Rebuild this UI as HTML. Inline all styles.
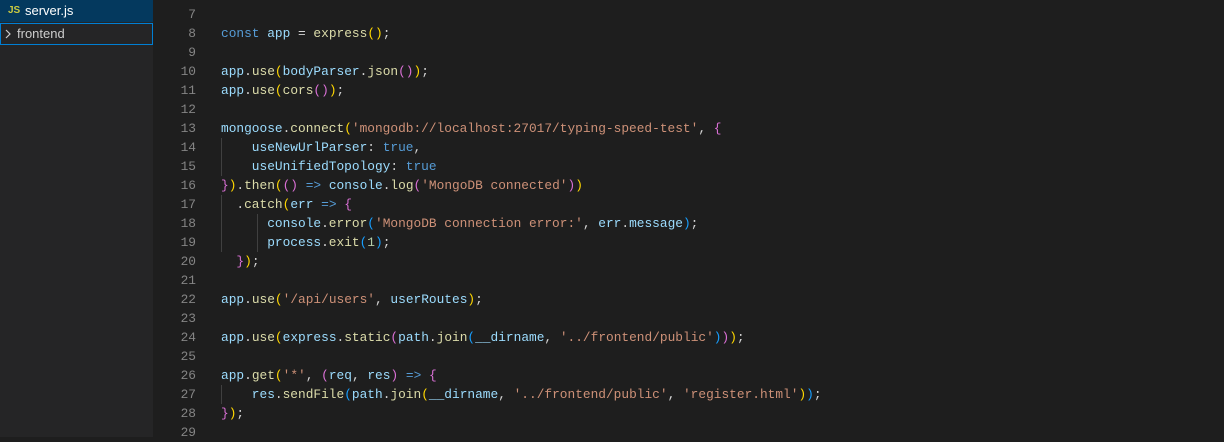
<!DOCTYPE html>
<html><head><style>
body{margin:0;width:1224px;height:437px;background:#1e1e1e;overflow:hidden;position:relative;font-family:"Liberation Mono",monospace}
.side{position:absolute;left:0;top:0;width:153px;height:437px;background:#252526;font-family:"Liberation Sans",sans-serif;font-size:13px;color:#ccc}
.r1{position:absolute;left:0;top:0;width:153px;height:22px;background:#04395e;color:#fff}
.r2{position:absolute;left:0;top:23px;width:151px;height:20px;border:1px solid #007fd4}
.ln{position:absolute;left:160px;width:36px;text-align:right;color:#858585;font-size:12.83px;line-height:19px}
.c{position:absolute;left:221px;color:#d4d4d4;font-size:12.83px;line-height:19px;white-space:pre}
.k{color:#569cd6}.v{color:#9cdcfe}.f{color:#dcdcaa}.s{color:#ce9178}.n{color:#b5cea8}
.g{color:#ffd700}.p{color:#da70d6}.b{color:#179fff}
.guide{position:absolute;width:1px;background:#404040}
</style></head><body>
<div class="side">
<div class="r1"><span style="position:absolute;left:8px;top:5px;color:#cbcb41;font-size:10px;font-weight:bold">JS</span><span style="position:absolute;left:25px;top:3px">server.js</span></div>
<div class="r2"><svg style="position:absolute;left:2px;top:4px" width="10" height="12" viewBox="0 0 10 12"><path d="M3 2 L7 6 L3 10" fill="none" stroke="#ccc" stroke-width="1.2"/></svg><span style="position:absolute;left:16px;top:2px">frontend</span></div>
</div>
<div class="guide" style="left:221px;top:138px;height:38px"></div>
<div class="guide" style="left:221px;top:195px;height:57px"></div>
<div class="guide" style="left:257px;top:214px;height:38px"></div>
<div class="guide" style="left:221px;top:385px;height:19px"></div>
<div class="ln" style="top:4.5px">7</div>
<div class="ln" style="top:23.5px">8</div><div class="c" style="top:23.5px"><span class="k">const</span> <span class="v">app</span> = <span class="f">express</span><span class="g">()</span>;</div>
<div class="ln" style="top:42.5px">9</div>
<div class="ln" style="top:61.5px">10</div><div class="c" style="top:61.5px"><span class="v">app</span>.<span class="f">use</span><span class="g">(</span><span class="v">bodyParser</span>.<span class="f">json</span><span class="p">()</span><span class="g">)</span>;</div>
<div class="ln" style="top:80.5px">11</div><div class="c" style="top:80.5px"><span class="v">app</span>.<span class="f">use</span><span class="g">(</span><span class="f">cors</span><span class="p">()</span><span class="g">)</span>;</div>
<div class="ln" style="top:99.5px">12</div>
<div class="ln" style="top:118.5px">13</div><div class="c" style="top:118.5px"><span class="v">mongoose</span>.<span class="f">connect</span><span class="g">(</span><span class="s">'mongodb://localhost:27017/typing-speed-test'</span>, <span class="p">{</span></div>
<div class="ln" style="top:137.5px">14</div><div class="c" style="top:137.5px">    <span class="v">useNewUrlParser</span>: <span class="k">true</span>,</div>
<div class="ln" style="top:156.5px">15</div><div class="c" style="top:156.5px">    <span class="v">useUnifiedTopology</span>: <span class="k">true</span></div>
<div class="ln" style="top:175.5px">16</div><div class="c" style="top:175.5px"><span class="p">}</span><span class="g">)</span>.<span class="f">then</span><span class="g">(</span><span class="p">()</span> <span class="k">=&gt;</span> <span class="v">console</span>.<span class="f">log</span><span class="p">(</span><span class="s">'MongoDB connected'</span><span class="p">)</span><span class="g">)</span></div>
<div class="ln" style="top:194.5px">17</div><div class="c" style="top:194.5px">  .<span class="f">catch</span><span class="g">(</span><span class="v">err</span> <span class="k">=&gt;</span> <span class="p">{</span></div>
<div class="ln" style="top:213.5px">18</div><div class="c" style="top:213.5px">      <span class="v">console</span>.<span class="f">error</span><span class="b">(</span><span class="s">'MongoDB connection error:'</span>, <span class="v">err</span>.<span class="v">message</span><span class="b">)</span>;</div>
<div class="ln" style="top:232.5px">19</div><div class="c" style="top:232.5px">      <span class="v">process</span>.<span class="f">exit</span><span class="b">(</span><span class="n">1</span><span class="b">)</span>;</div>
<div class="ln" style="top:251.5px">20</div><div class="c" style="top:251.5px">  <span class="p">}</span><span class="g">)</span>;</div>
<div class="ln" style="top:270.5px">21</div>
<div class="ln" style="top:289.5px">22</div><div class="c" style="top:289.5px"><span class="v">app</span>.<span class="f">use</span><span class="g">(</span><span class="s">'/api/users'</span>, <span class="v">userRoutes</span><span class="g">)</span>;</div>
<div class="ln" style="top:308.5px">23</div>
<div class="ln" style="top:327.5px">24</div><div class="c" style="top:327.5px"><span class="v">app</span>.<span class="f">use</span><span class="g">(</span><span class="v">express</span>.<span class="f">static</span><span class="p">(</span><span class="v">path</span>.<span class="f">join</span><span class="b">(</span><span class="v">__dirname</span>, <span class="s">'../frontend/public'</span><span class="b">)</span><span class="p">)</span><span class="g">)</span>;</div>
<div class="ln" style="top:346.5px">25</div>
<div class="ln" style="top:365.5px">26</div><div class="c" style="top:365.5px"><span class="v">app</span>.<span class="f">get</span><span class="g">(</span><span class="s">'*'</span>, <span class="p">(</span><span class="v">req</span>, <span class="v">res</span><span class="p">)</span> <span class="k">=&gt;</span> <span class="p">{</span></div>
<div class="ln" style="top:384.5px">27</div><div class="c" style="top:384.5px">    <span class="v">res</span>.<span class="f">sendFile</span><span class="b">(</span><span class="v">path</span>.<span class="f">join</span><span class="g">(</span><span class="v">__dirname</span>, <span class="s">'../frontend/public'</span>, <span class="s">'register.html'</span><span class="g">)</span><span class="b">)</span>;</div>
<div class="ln" style="top:403.5px">28</div><div class="c" style="top:403.5px"><span class="p">}</span><span class="g">)</span>;</div>
<div class="ln" style="top:422.5px">29</div>
</body></html>
